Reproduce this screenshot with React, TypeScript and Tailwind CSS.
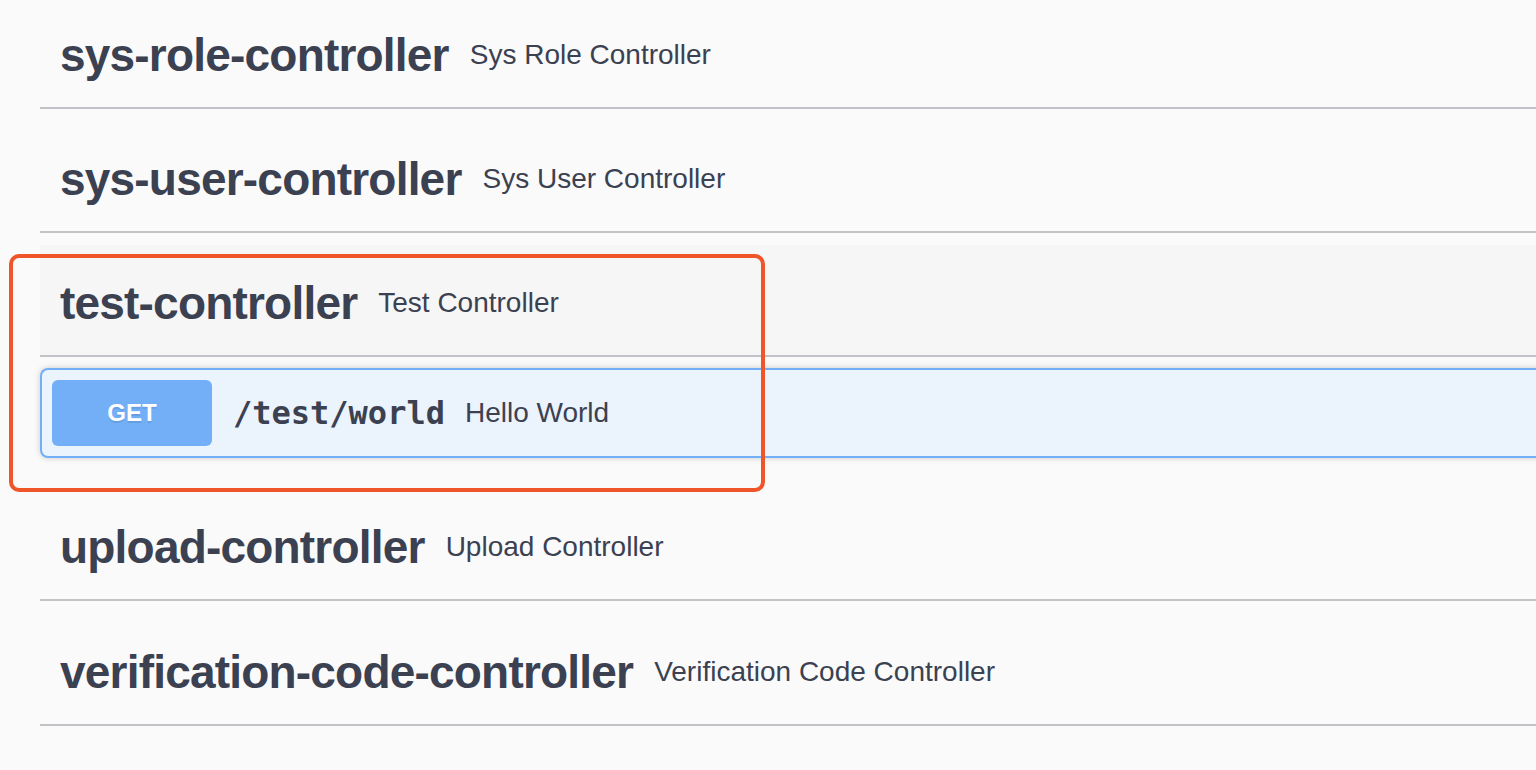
const tags = [
  { name: "sys-role-controller", desc: "Sys Role Controller" },
  { name: "sys-user-controller", desc: "Sys User Controller" },
  { name: "test-controller", desc: "Test Controller", open: true },
  { name: "upload-controller", desc: "Upload Controller" },
  { name: "verification-code-controller", desc: "Verification Code Controller" },
];

const sans = "font-['Liberation_Sans',Arial,sans-serif]";

function TagRow({ name, desc, open }: { name: string; desc: string; open?: boolean }) {
  return (
    <div
      className={`flex items-center h-[112px] pt-[6px] pl-[20px] border-b-2 border-[#c1c3c7] ${
        open ? "bg-[#f6f6f6]" : ""
      }`}
    >
      <h3 className={`${sans} text-[46px] font-bold leading-none tracking-[-0.8px] text-[#3b4151]`}>
        {name}
      </h3>
      <small className={`${sans} ml-[21px] text-[28px] leading-none text-[#3b4151]`}>{desc}</small>
    </div>
  );
}

function Operation() {
  return (
    <div className="flex items-center h-[90px] pl-[10px] border-2 border-r-0 border-[#72aff6] rounded-l-[8px] bg-[#ebf3fc] shadow-[0_0_6px_rgba(0,0,0,0.19)]">
      <span
        className={`${sans} flex items-center justify-center w-[160px] h-[66px] rounded-[6px] bg-[#72aff7] text-white text-[24px] font-bold leading-none [text-shadow:0_2px_0_rgba(0,0,0,0.1)]`}
      >
        GET
      </span>
      <span className="ml-[21px] font-['DejaVu_Sans_Mono',monospace] text-[32px] font-bold leading-none text-[#3b4151]">
        /test/world
      </span>
      <span className={`${sans} ml-[20px] text-[28px] leading-none text-[#3b4151]`}>Hello World</span>
    </div>
  );
}

export default function App() {
  return (
    <div className="relative w-full h-[770px] overflow-hidden bg-[#fafafa]">
      <div className="ml-[40px] w-[1560px] -mt-[3px] flex flex-col">
        <div className="mb-[12px]">
          <TagRow {...tags[0]} />
        </div>
        <div className="mb-[12px]">
          <TagRow {...tags[1]} />
        </div>
        <div className="mb-[31px]">
          <div className="mb-[11px]">
            <TagRow {...tags[2]} />
          </div>
          <Operation />
        </div>
        <div className="mb-[13px]">
          <TagRow {...tags[3]} />
        </div>
        <TagRow {...tags[4]} />
      </div>

      {/* annotation box around the opened tag */}
      <div className="absolute left-[9px] top-[254px] w-[756px] h-[238px] border-4 border-[#f0552a] rounded-[10px] pointer-events-none" />
    </div>
  );
}
